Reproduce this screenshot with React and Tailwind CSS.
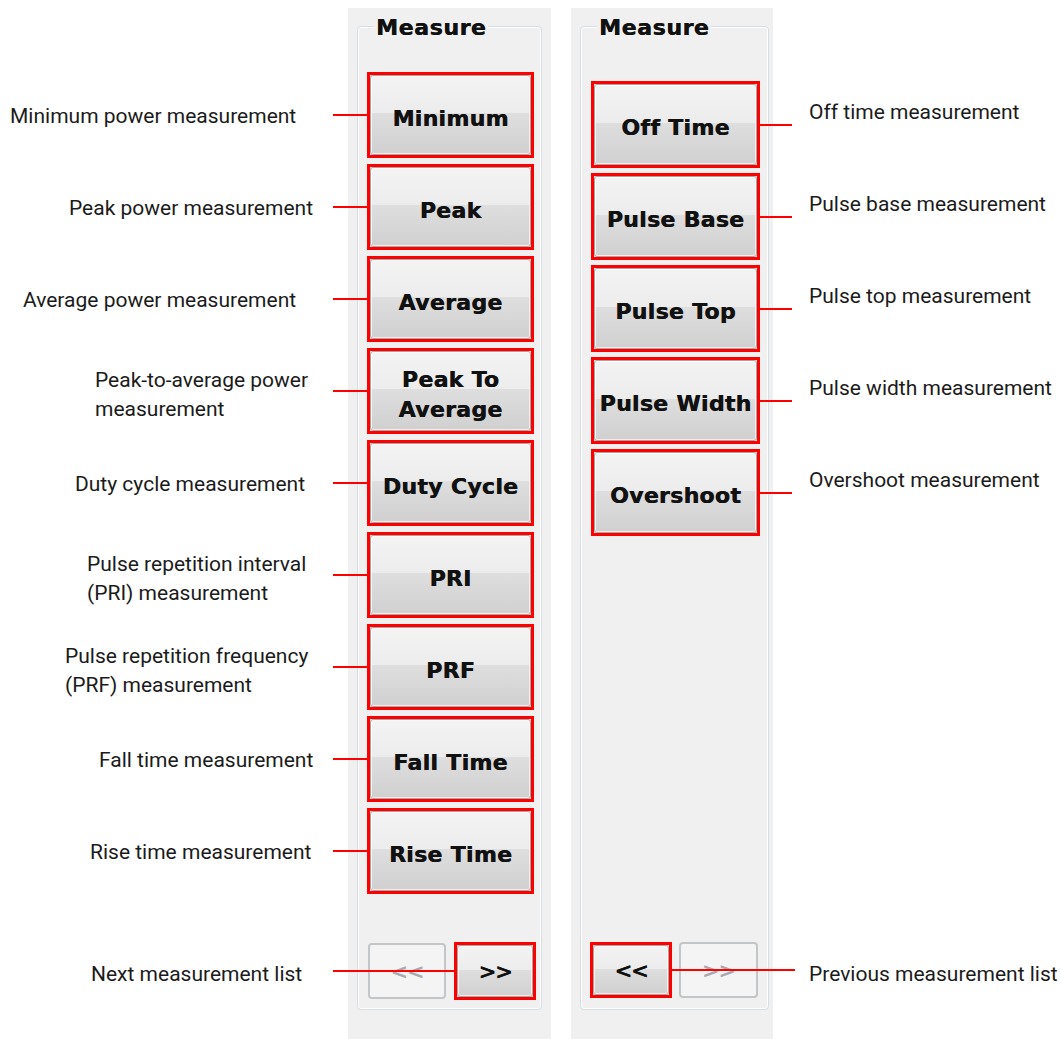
import React from "react";

const leftItems = [
  { btn: ["Minimum"], label: ["Minimum power measurement"], x: 10 },
  { btn: ["Peak"], label: ["Peak power measurement"], x: 69 },
  { btn: ["Average"], label: ["Average power measurement"], x: 23 },
  { btn: ["Peak To", "Average"], label: ["Peak-to-average power", "measurement"], x: 95 },
  { btn: ["Duty Cycle"], label: ["Duty cycle measurement"], x: 75 },
  { btn: ["PRI"], label: ["Pulse repetition interval", "(PRI) measurement"], x: 87 },
  { btn: ["PRF"], label: ["Pulse repetition frequency", "(PRF) measurement"], x: 65 },
  { btn: ["Fall Time"], label: ["Fall time measurement"], x: 99 },
  { btn: ["Rise Time"], label: ["Rise time measurement"], x: 90 },
];

const rightItems = [
  { btn: ["Off Time"], label: "Off time measurement" },
  { btn: ["Pulse Base"], label: "Pulse base measurement" },
  { btn: ["Pulse Top"], label: "Pulse top measurement" },
  { btn: ["Pulse Width"], label: "Pulse width measurement" },
  { btn: ["Overshoot"], label: "Overshoot measurement" },
];

const btnFace =
  "bg-[linear-gradient(to_bottom,#f3f3f3_0%,#ececec_48%,#dedede_48%,#d0d0d0_100%)]";

function FaceButton({ lines, small }) {
  return (
    <div
      className={`h-full w-full rounded-[3px] border border-[#a4a4a4] ${btnFace} shadow-[inset_0_0_0_1px_rgba(255,255,255,0.7)] flex flex-col items-center justify-center font-['DejaVu_Sans',sans-serif] font-bold text-[#111111] [text-shadow:0.5px_0_0_#111111] ${
        small
          ? "text-[21px] tracking-[-1px] pt-[4px]"
          : "text-[22px] tracking-[0.3px] leading-[30px] pt-[7px]"
      }`}
    >
      {lines.map((l) => (
        <span key={l} className="whitespace-nowrap">
          {l}
        </span>
      ))}
    </div>
  );
}

function DisabledButton({ text, w }) {
  return (
    <div
      className={`${w} h-[56px] rounded-[4px] border-2 border-[#c3c6c8] bg-[#f4f4f4] flex items-center justify-center font-['DejaVu_Sans',sans-serif] font-bold text-[21px] tracking-[-1px] text-[#a8a8b0] pt-[4px]`}
    >
      {text}
    </div>
  );
}

function GroupBox({ children }) {
  return (
    <div className="relative h-[984px] rounded-[4px] border border-[#d6dde3] shadow-[inset_0_0_0_1px_#ffffff] flex flex-col">
      <div className="absolute -top-[12px] left-[16px] px-[2px] bg-[#f0f0f0] font-['DejaVu_Sans',sans-serif] font-bold text-[22px] leading-[26px] tracking-[0.6px] text-[#111111] [text-shadow:0.5px_0_0_#111111]">
        Measure
      </div>
      {children}
    </div>
  );
}

export default function App() {
  return (
    <div className="w-[1061px] h-[1039px] bg-white flex overflow-hidden">
      {/* left labels */}
      <div className="w-[348px] shrink-0 flex flex-col pt-[72px] gap-[6px] font-['Roboto',sans-serif] text-[21px] leading-[29px] text-[#1b1b1b]">
        {leftItems.map((it) => (
          <div key={it.btn.join()} className="h-[86px] flex items-center">
            <div
              className={`${it.label.length > 1 ? "pt-[8px]" : "pt-[2px]"}`}
              style={{ marginLeft: it.x }}
            >
              {it.label.map((l) => (
                <div key={l} className="whitespace-nowrap">
                  {l}
                </div>
              ))}
            </div>
          </div>
        ))}
        <div className="mt-[60px] ml-[91px] whitespace-nowrap">Next measurement list</div>
      </div>

      {/* left panel */}
      <div className="w-[203px] shrink-0 mt-[8px] h-[1031px] bg-[#f0f0f0] pt-[18px] px-[9px]">
        <GroupBox>
          <div className="flex flex-col gap-[6px] pt-[45px] pl-[9px]">
            {leftItems.map((it) => (
              <div
                key={it.btn.join()}
                className="relative w-[167px] h-[86px] border-[3px] border-[#ff0000]"
              >
                <div className="absolute top-1/2 -translate-y-1/2 right-[calc(100%+3px)] w-[34px] h-[2px] bg-[#ff0000]" />
                <FaceButton lines={it.btn} />
              </div>
            ))}
          </div>
          <div className="flex-1" />
          <div className="flex items-center pl-[10px] pb-[9px] gap-[8px]">
            <DisabledButton text="<<" w="w-[78px]" />
            <div className="relative w-[82px] h-[58px] border-[3px] border-[#ff0000]">
              <div className="absolute z-10 top-1/2 -translate-y-1/2 right-[calc(100%+3px)] w-[121px] h-[2px] bg-[#ff0000]" />
              <FaceButton lines={[">>"]} small />
            </div>
          </div>
        </GroupBox>
      </div>

      <div className="w-[20px] shrink-0" />

      {/* right panel */}
      <div className="w-[202px] shrink-0 mt-[8px] h-[1031px] bg-[#f0f0f0] pt-[18px] pl-[9px] pr-[4px]">
        <GroupBox>
          <div className="flex flex-col gap-[5px] pt-[54px] pl-[10px]">
            {rightItems.map((it) => (
              <div
                key={it.btn.join()}
                className="relative w-[169px] h-[87px] border-[3px] border-[#ff0000]"
              >
                <div className="absolute top-1/2 -translate-y-1/2 left-[calc(100%+3px)] w-[32px] h-[2px] bg-[#ff0000]" />
                <FaceButton lines={it.btn} />
              </div>
            ))}
          </div>
          <div className="flex-1" />
          <div className="flex items-center pl-[9px] pb-[11px] gap-[7px]">
            <div className="relative w-[82px] h-[56px] border-[3px] border-[#ff0000]">
              <div className="absolute z-10 top-1/2 -translate-y-1/2 left-[calc(100%+3px)] w-[123px] h-[2px] bg-[#ff0000]" />
              <FaceButton lines={["<<"]} small />
            </div>
            <DisabledButton text=">>" w="w-[79px]" />
          </div>
        </GroupBox>
      </div>

      {/* right labels */}
      <div className="flex-1 flex flex-col pl-[36px] pt-[81px] gap-[5px] font-['Roboto',sans-serif] text-[21px] leading-[29px] text-[#1b1b1b]">
        {rightItems.map((it) => (
          <div key={it.label} className="h-[87px] pt-[17px] whitespace-nowrap">
            {it.label}
          </div>
        ))}
        <div className="mt-[419px] whitespace-nowrap">Previous measurement list</div>
      </div>
    </div>
  );
}
